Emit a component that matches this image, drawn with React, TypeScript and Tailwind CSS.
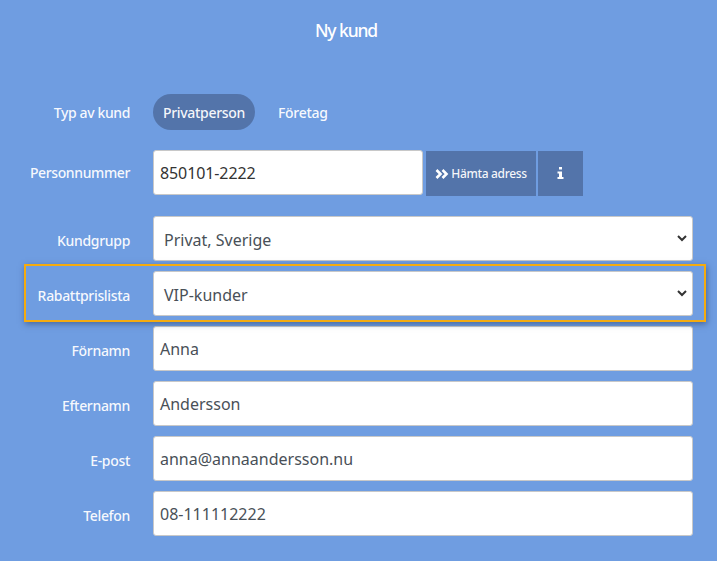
const font = { fontFamily: '"Noto Sans", sans-serif' };

function Label({ children, low = false }: { children: React.ReactNode; low?: boolean }) {
  return <div className={low ? "w-[130px] shrink-0 pt-[4px] text-right text-[14px] font-medium text-white/95 tracking-[-0.32px]" : "w-[130px] shrink-0 text-right text-[14px] font-medium text-white/95 tracking-[-0.38px]"}>{children}</div>;
}

function Field({ label, value }: { label: string; value: string }) {
  return (
    <div className="flex h-[45px] items-center gap-[23px]">
      <Label low>{label}</Label>
      <div className="flex h-[45px] w-[540px] items-center rounded-[3px] border border-[#c8c8c8] bg-white pl-[6px] text-[16px] text-[#495057]">{value}</div>
    </div>
  );
}

function SelectField({ label, value }: { label: string; value: string }) {
  return (
    <div className="flex h-[45px] items-center gap-[23px]">
      <Label low>{label}</Label>
      <div className="flex h-[45px] w-[540px] items-center justify-between rounded-[3px] border border-[#c8c8c8] bg-white pl-[10px] pr-[4px] pt-[2px] text-[16px] text-[#495057]">
        <span>{value}</span>
        <svg width="12" height="8" viewBox="0 0 12 8" className="mt-[-3px]"><path d="M2 2l4 4 4-4" fill="none" stroke="#333" strokeWidth="2" /></svg>
      </div>
    </div>
  );
}

export default function App() {
  return (
    <div style={font} className="relative h-[561px] w-[717px] overflow-hidden bg-[#6f9de1]">
      <h1 className="w-[692px] pt-[18px] text-center text-[17.5px] font-medium leading-[24px] tracking-[-1.1px] text-white">Ny kund</h1>

      <div className="mt-[52px] flex h-[36px] items-center gap-[23px]">
        <Label>Typ av kund</Label>
        <div className="flex items-center text-[14px] font-medium tracking-[-0.3px] text-white/95">
          <span className="flex h-[36px] w-[102px] items-center justify-center rounded-full bg-[#5374aa]">Privatperson</span>
          <span className="ml-[23px]">Företag</span>
        </div>
      </div>

      <div className="mt-[20px] flex h-[45px] items-center gap-[23px]">
        <Label>Personnummer</Label>
        <div className="flex h-[45px] w-[270px] items-center rounded-[3px] border border-[#c8c8c8] bg-white pl-[6px] text-[16px] tracking-[-0.1px] text-[#333]">850101-2222</div>
        <div className="ml-[-20px] mt-[2px] flex gap-[2px] text-white/95">
          <div className="flex h-[45px] w-[110px] items-center justify-center gap-[2px] bg-[#5374aa] text-[12px] font-medium tracking-[-0.35px]">
            <svg width="14" height="10" viewBox="0 0 14 10"><path d="M1.5 1l4 4-4 4M7.5 1l4 4-4 4" fill="none" stroke="#fff" strokeWidth="2.6" /></svg>
            Hämta adress
          </div>
          <div className="flex h-[45px] w-[45px] items-center justify-center bg-[#5374aa] pb-[1px]">
            <svg width="7" height="12" viewBox="0 0 7 12"><path d="M2 0h3v2.5H2zM0.5 4.5H5V10h1.5v2H0.5v-2H2V6.5H0.5z" fill="#fff" /></svg>
          </div>
        </div>
      </div>

      <div className="mt-[21px] flex flex-col gap-[10px]">
        <SelectField label="Kundgrupp" value="Privat, Sverige" />
        <SelectField label="Rabattprislista" value="VIP-kunder" />
        <Field label="Förnamn" value="Anna" />
        <Field label="Efternamn" value="Andersson" />
        <Field label="E-post" value="anna@annaandersson.nu" />
        <Field label="Telefon" value="08-111112222" />
      </div>

      <div className="pointer-events-none absolute left-[24px] top-[264px] h-[58px] w-[682px] border-2 border-[#f5ab0f] shadow-[1px_2px_6px_rgba(30,50,90,0.5)]" />
    </div>
  );
}
